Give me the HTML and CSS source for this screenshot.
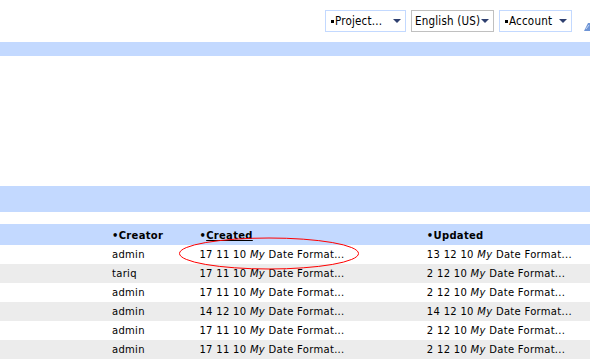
FILE: index.html
```html
<!DOCTYPE html>
<html>
<head>
<meta charset="utf-8">
<link rel="stylesheet" href="styles.css">
</head>
<body>
<div class="page">
  <div class="topnav">
    <div class="dd dd-blue dd-proj"><span class="sq"></span>Project...<span class="caret"></span></div>
    <div class="dd dd-grey">English (US)<span class="caret"></span></div>
    <div class="dd dd-blue dd-acct"><span class="sq"></span>Account<span class="caret"></span></div>
    <svg class="help" width="12" height="10" viewBox="0 0 12 10"><path d="M1 9 L5 1 L8 1 L7 9 Z" fill="#6f95d6"/><path d="M3 7 L6 3" stroke="#c6d7f3" stroke-width="1"/></svg>
  </div>
  <div class="bar bar-thin"></div>
  <div class="blank"></div>
  <div class="bar bar-thick"></div>
  <div class="grid-wrap">
    <table class="grid">
      <thead>
        <tr class="head">
          <th class="c0"></th>
          <th class="c1">•Creator</th>
          <th class="c2">•<span class="ul">Created</span></th>
          <th class="c3">•Updated</th>
        </tr>
      </thead>
      <tbody>
        <tr><td></td><td>admin</td><td>17 11 10 <i>My</i> Date Format...</td><td>13 12 10 <i>My</i> Date Format...</td></tr>
        <tr class="alt"><td></td><td>tariq</td><td>17 11 10 <i>My</i> Date Format...</td><td>2 12 10 <i>My</i> Date Format...</td></tr>
        <tr><td></td><td>admin</td><td>17 11 10 <i>My</i> Date Format...</td><td>2 12 10 <i>My</i> Date Format...</td></tr>
        <tr class="alt"><td></td><td>admin</td><td>14 12 10 <i>My</i> Date Format...</td><td>14 12 10 <i>My</i> Date Format...</td></tr>
        <tr><td></td><td>admin</td><td>17 11 10 <i>My</i> Date Format...</td><td>2 12 10 <i>My</i> Date Format...</td></tr>
        <tr class="alt"><td></td><td>admin</td><td>17 11 10 <i>My</i> Date Format...</td><td>2 12 10 <i>My</i> Date Format...</td></tr>
      </tbody>
    </table>
    <svg class="mark" width="182" height="34" viewBox="0 0 182 34"><ellipse cx="90" cy="16.5" rx="89.5" ry="15.5" fill="none" stroke="#ff0000" stroke-width="1"/></svg>
  </div>
</div>
</body>
</html>
```
FILE: styles.css
```css
html, body {
  margin: 0;
  padding: 0;
  background: #ffffff;
  overflow: hidden;
}
.page {
  width: 590px;
  height: 359px;
  overflow: hidden;
  font-family: "DejaVu Sans", sans-serif;
  font-size: 10px;
  letter-spacing: 0.3px;
  color: #000;
}
.topnav {
  display: flex;
  justify-content: flex-end;
  align-items: flex-start;
  gap: 5px;
  padding-top: 10px;
  height: 22px;
  margin-right: -5px;
}
.dd {
  box-sizing: border-box;
  height: 22px;
  display: flex;
  align-items: center;
  padding: 0 4px 0 4px;
  font-family: "DejaVu Sans Condensed", "DejaVu Sans", sans-serif;
  font-size: 11.5px;
  letter-spacing: 0.2px;
  white-space: nowrap;
  color: #000;
  background: #fff;
  flex: none;
}
.dd-blue { border: 1px solid #c3d9ff; }
.dd-grey { border: 1px solid #c0c0c0; width: 83px; padding-left: 3px; }
.dd-proj { width: 81px; }
.dd-acct { width: 73px; }
.sq {
  display: inline-block;
  width: 3px;
  height: 3px;
  background: #000;
  margin: 0 1px 0 1px;
}
.caret {
  display: inline-block;
  flex: none;
  width: 0;
  height: 0;
  border-left: 4px solid transparent;
  border-right: 4px solid transparent;
  border-top: 4px solid #2e3f6f;
  margin-left: auto;
}
.help {
  flex: none;
  margin-top: 12px;
  margin-left: 6px;
}
.bar { background: #c3d9ff; }
.bar-thin { height: 14px; margin-top: 10px; }
.blank { height: 130px; }
.bar-thick { height: 26px; }
.grid-wrap {
  position: relative;
  margin-top: 12px;
}
.grid {
  border-collapse: collapse;
  table-layout: fixed;
  width: 640px;
}
.grid th, .grid td {
  padding: 0 0 0 5px;
  text-align: left;
  white-space: nowrap;
  overflow: hidden;
}
.grid .c0 { width: 104px; }
.grid .c1 { width: 85px; }
.grid .c2 { width: 221px; }
.grid .c3 { width: 212px; }
.head th {
  background: #c3d9ff;
  height: 21px;
  font-weight: bold;
  padding-top: 1px;
  box-sizing: border-box;
}
.ul { text-decoration: underline; }
.grid td { height: 19px; }
.grid tr.alt td { background: #ececec; }
.mark {
  position: absolute;
  left: 179px;
  top: 13px;
}
```
